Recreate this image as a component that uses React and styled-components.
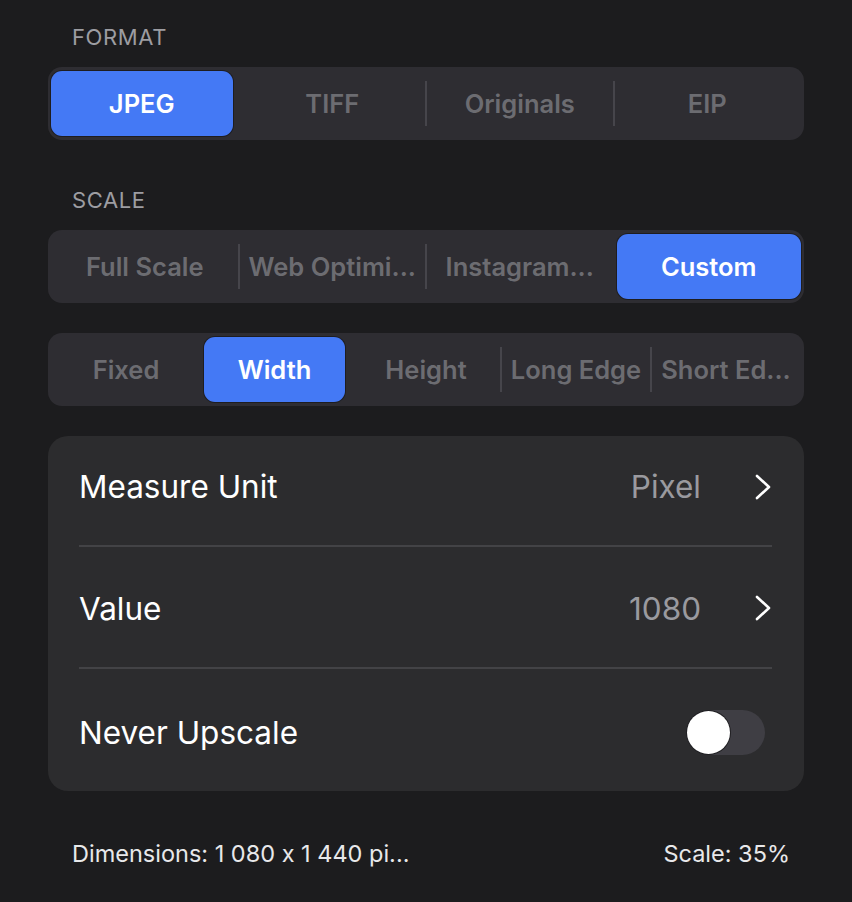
import React from 'react';
import styled, { createGlobalStyle, css } from 'styled-components';

const GlobalStyle = createGlobalStyle`
  html, body {
    margin: 0;
    padding: 0;
    background: #1c1c1e;
  }
  body {
    font-family: Inter, "Noto Sans", sans-serif;
    font-feature-settings: "calt" 0;
    -webkit-font-smoothing: antialiased;
  }
`;

const Page = styled.div`
  width: 852px;
  min-height: 902px;
  box-sizing: border-box;
  padding: 25px 48px 0;
  background: #1c1c1e;
`;

const SectionLabel = styled.div`
  padding-left: 24px;
  font-size: 22px;
  line-height: 24px;
  color: #9d9da2;
  text-transform: uppercase;
  letter-spacing: 0.6px;
  margin-top: ${(props) => props.$top || 0}px;
  margin-bottom: 18px;
`;

const Segmented = styled.div`
  display: grid;
  grid-template-columns: repeat(${(props) => props.$count}, 1fr);
  height: 73px;
  box-sizing: border-box;
  padding: 4px 3px;
  background: #2e2d32;
  border-radius: 14px;
  margin-bottom: ${(props) => props.$bottom || 0}px;
`;

const Segment = styled.div`
  position: relative;
  display: flex;
  align-items: center;
  justify-content: center;
  border-radius: 11px;
  font-size: 25.5px;
  font-weight: 600;
  color: #6c6c71;
  white-space: nowrap;
  ${(props) =>
    props.$active &&
    css`
      background: #4479f5;
      color: #ffffff;
      box-shadow: 0 0 0 1px rgba(0, 0, 0, 0.35);
      margin: 0 ${props.$last ? 0 : 6}px 0 ${props.$first ? 0 : 3}px;
    `}
  ${(props) =>
    props.$divider &&
    css`
      &::before {
        content: '';
        position: absolute;
        left: -1px;
        top: 10px;
        bottom: 10px;
        width: 2px;
        background: #46454b;
      }
    `}
`;

const Card = styled.div`
  background: #2c2c2e;
  border-radius: 20px;
  padding: 0 32px 0 31px;
  margin-top: 30px;
`;

const Row = styled.div`
  display: flex;
  align-items: center;
  justify-content: space-between;
  height: ${(props) => props.$height}px;
  box-sizing: border-box;
  padding-top: ${(props) => Math.max(props.$offset || 0, 0)}px;
  padding-bottom: ${(props) => Math.max(-(props.$offset || 0), 0)}px;
  ${(props) =>
    props.$separator &&
    css`
      border-bottom: 2px solid #434346;
    `}
`;

const RowTitle = styled.div`
  font-size: 31.5px;
  color: #ffffff;
`;

const RowValue = styled.div`
  display: flex;
  align-items: center;
  gap: 53px;
  font-size: 31.5px;
  color: #9a9a9f;
`;

const Chevron = () => (
  <svg width="18" height="26" viewBox="0 0 18 26" fill="none">
    <path
      d="M3 2 L15 13 L3 24"
      stroke="#ffffff"
      strokeWidth="2.6"
      strokeLinecap="round"
      strokeLinejoin="round"
    />
  </svg>
);

const Toggle = styled.div`
  width: 79px;
  height: 45px;
  border-radius: 23px;
  background: #3f3e44;
  margin-right: 7px;
  display: flex;
  align-items: center;
  padding: 1px;
  box-sizing: border-box;
`;

const Knob = styled.div`
  width: 43px;
  height: 43px;
  border-radius: 50%;
  background: #ffffff;
  box-shadow: 0 0 0 1px rgba(0, 0, 0, 0.5);
`;

const Footer = styled.div`
  display: flex;
  justify-content: space-between;
  align-items: center;
  margin-top: 50px;
  padding: 0 14px 0 24px;
  font-size: 23.5px;
  line-height: 26px;
  color: #e8e8ea;
`;

const SegmentGroup = ({ items, active, bottom }) => (
  <Segmented $count={items.length} $bottom={bottom}>
    {items.map((label, i) => (
      <Segment
        key={label}
        $active={i === active}
        $first={i === 0}
        $last={i === items.length - 1}
        $divider={i > 0 && i !== active && i - 1 !== active}
      >
        {label}
      </Segment>
    ))}
  </Segmented>
);

export default function App() {
  return (
    <Page>
      <GlobalStyle />
      <SectionLabel>Format</SectionLabel>
      <SegmentGroup items={['JPEG', 'TIFF', 'Originals', 'EIP']} active={0} />

      <SectionLabel $top={48}>Scale</SectionLabel>
      <SegmentGroup
        items={['Full Scale', 'Web Optimi...', 'Instagram...', 'Custom']}
        active={3}
        bottom={30}
      />
      <SegmentGroup
        items={['Fixed', 'Width', 'Height', 'Long Edge', 'Short Ed...']}
        active={1}
      />

      <Card>
        <Row $height={111} $offset={-8} $separator>
          <RowTitle>Measure Unit</RowTitle>
          <RowValue>
            Pixel
            <Chevron />
          </RowValue>
        </Row>
        <Row $height={122} $offset={2} $separator>
          <RowTitle>Value</RowTitle>
          <RowValue>
            1080
            <Chevron />
          </RowValue>
        </Row>
        <Row $height={122} $offset={4}>
          <RowTitle>Never Upscale</RowTitle>
          <Toggle>
            <Knob />
          </Toggle>
        </Row>
      </Card>

      <Footer>
        <span>Dimensions: 1 080 x 1 440 pi...</span>
        <span>Scale: 35%</span>
      </Footer>
    </Page>
  );
}
